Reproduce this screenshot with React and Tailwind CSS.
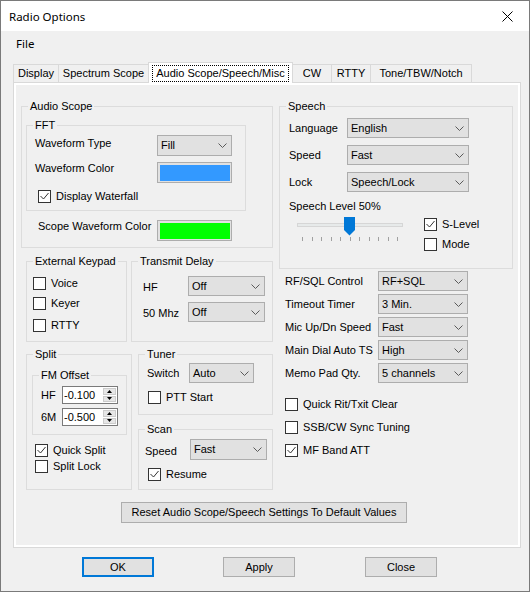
import React from "react";

function Chevron() {
  return (
    <svg width="9" height="5" viewBox="0 0 9 5" className="shrink-0">
      <path d="M0.5 0.5 L4.5 4.5 L8.5 0.5" fill="none" stroke="#5a5a5a" strokeWidth="1" />
    </svg>
  );
}

function Combo({ value, w, h = "h-[20px]" }) {
  return (
    <div className={`${w} ${h} flex items-center justify-between border border-[#adadad] bg-[#e1e1e1] pl-[3px] pr-[4px]`}>
      <span>{value}</span>
      <Chevron />
    </div>
  );
}

function Check({ checked, label, className = "" }) {
  return (
    <div className={`flex items-center gap-[5px] ${className}`}>
      <span className="w-[13px] h-[13px] border border-[#333333] bg-white flex items-center justify-center">
        {checked && (
          <svg width="11" height="11" viewBox="0 0 11 11">
            <path d="M1.5 5 L4.5 8 L9.5 2" fill="none" stroke="#333333" strokeWidth="1" />
          </svg>
        )}
      </span>
      <span className="leading-[13px]">{label}</span>
    </div>
  );
}

function Group({ title, className = "", children }) {
  return (
    <fieldset className={`border border-[#dcdcdc] ${className}`}>
      <legend className="ml-[6px] px-[2px] leading-[13px]">{title}</legend>
      {children}
    </fieldset>
  );
}

function ColorBtn({ color }) {
  return (
    <div className="w-[75px] h-[21px] border border-[#adadad] bg-[#e1e1e1] pl-[2px] pt-[2px] pr-[1px] pb-[1px]">
      <div className={`w-full h-full ${color}`} />
    </div>
  );
}

function Spin({ value }) {
  return (
    <div className="w-[56px] h-[18px] flex border border-[#7a7a7a] bg-white">
      <span className="flex-1 pl-[1px] leading-[16px]">{value}</span>
      <div className="w-[15px] flex flex-col gap-px p-px">
        <div className="flex-1 bg-[#e6e6e6] border border-[#cccccc] flex items-center justify-center">
          <svg width="5" height="3" viewBox="0 0 5 3"><path d="M2.5 0 L5 3 L0 3 Z" fill="#000" /></svg>
        </div>
        <div className="flex-1 bg-[#e6e6e6] border border-[#cccccc] flex items-center justify-center">
          <svg width="5" height="3" viewBox="0 0 5 3"><path d="M0 0 L5 0 L2.5 3 Z" fill="#000" /></svg>
        </div>
      </div>
    </div>
  );
}

function Slider() {
  return (
    <div className="relative w-[106px] h-[25px] ml-[8px]">
      <div className="mt-[6px] h-[4px] bg-[#e7eaea] border border-[#d6d6d6]" />
      <div className="mt-[10px] flex justify-between px-[5px]">
        {Array.from({ length: 11 }).map((_, i) => (
          <span key={i} className="w-px h-[4px] bg-[#a0a0a0]" />
        ))}
      </div>
      {/* thumb */}
      <svg className="absolute left-[47px] top-0" width="11" height="19" viewBox="0 0 11 19">
        <path d="M0 0 H11 V13 L5.5 18.5 L0 13 Z" fill="#0078d7" />
      </svg>
    </div>
  );
}

function Btn({ children, className = "" }) {
  return (
    <div className={`flex items-center justify-center bg-[#e1e1e1] border border-[#adadad] ${className}`}>
      {children}
    </div>
  );
}

const tabs = [
  { name: "Display", w: "w-[46px]" },
  { name: "Spectrum Scope", w: "w-[91px]" },
  { name: "Audio Scope/Speech/Misc", w: "w-[145px]", active: true },
  { name: "CW", w: "w-[40px]" },
  { name: "RTTY", w: "w-[40px]" },
  { name: "Tone/TBW/Notch", w: "w-[102px]" },
];

const miscRows = [
  ["RF/SQL Control", "RF+SQL"],
  ["Timeout Timer", "3 Min."],
  ["Mic Up/Dn Speed", "Fast"],
  ["Main Dial Auto TS", "High"],
  ["Memo Pad Qty.", "5 channels"],
];

export default function App() {
  return (
    <div className="w-[530px] h-[592px] bg-[#f0f0f0] border border-[#7a7a7a] flex flex-col font-['Liberation_Sans',Arial,sans-serif] text-[11px] leading-[13px] text-black">
      {/* Title bar */}
      <div className="h-[30px] shrink-0 bg-white flex items-center justify-between pl-[8px] pr-[16px] font-['Noto_Sans',sans-serif] text-[11.5px]">
        <span>Radio Options</span>
        <svg width="11" height="11" viewBox="0 0 11 11">
          <path d="M0.5 0.5 L10.5 10.5 M10.5 0.5 L0.5 10.5" stroke="#000" strokeWidth="1" />
        </svg>
      </div>

      {/* Menu */}
      <div className="h-[24px] shrink-0 flex items-center pl-[15px] font-['Noto_Sans',sans-serif] text-[11.5px]">
        <span>File</span>
      </div>

      {/* Tabs */}
      <div className="pl-[12px] pt-[7px]">
        <div className="flex items-end h-[20px]">
          {tabs.map((t, i) =>
            t.active ? (
              <div
                key={t.name}
                className={`${t.w} -ml-px h-[21px] -mb-px relative z-10 bg-white border-t border-l border-r border-[#d9d9d9] flex items-center justify-center`}
              >
                <span className="border border-dotted border-black px-[3px] leading-[15px]">{t.name}</span>
              </div>
            ) : (
              <div
                key={t.name}
                className={`${t.w} ${i > 0 ? "-ml-px" : ""} h-[18px] border-t border-l border-r border-[#d9d9d9] flex items-center justify-center`}
              >
                {t.name}
              </div>
            )
          )}
        </div>

        <div className="w-[508px] h-[466px] border border-[#d9d9d9]">
          <div className="h-full border-2 border-white pl-[5px] pt-[15px]">
            <div className="flex">
              {/* Left column */}
              <div className="w-[252px] flex flex-col">
                <Group title="Audio Scope" className="w-[252px] h-[148px]">
                  <Group title="FFT" className="ml-[4px] mt-[6px] w-[220px] h-[92px]">
                    <div className="flex items-start mt-[3px] pl-[8px]">
                      <span className="w-[122px] pt-[2px]">Waveform Type</span>
                      <Combo value="Fill" w="w-[75px]" h="h-[21px]" />
                    </div>
                    <div className="flex items-start mt-[6px] pl-[8px]">
                      <span className="w-[122px]">Waveform Color</span>
                      <ColorBtn color="bg-[#3399ff]" />
                    </div>
                    <Check checked label="Display Waterfall" className="mt-[7px] ml-[11px]" />
                  </Group>
                  <div className="flex items-start mt-[9px] pl-[16px]">
                    <span className="w-[119px]">Scope Waveform Color</span>
                    <ColorBtn color="bg-[#00ff00]" />
                  </div>
                </Group>

                <div className="flex mt-[7px] ml-[5px] gap-[4px]">
                  <Group title="External Keypad" className="w-[101px] h-[87px]">
                    <div className="pl-[6px] flex flex-col">
                      <Check label="Voice" className="mt-[9px]" />
                      <Check label="Keyer" className="mt-[7px]" />
                      <Check label="RTTY" className="mt-[9px]" />
                    </div>
                  </Group>
                  <Group title="Transmit Delay" className="w-[142px] h-[87px]">
                    <div className="pl-[11px]">
                      <div className="flex items-center mt-[8px]">
                        <span className="w-[45px] pt-[2px]">HF</span>
                        <Combo value="Off" w="w-[77px]" />
                      </div>
                      <div className="flex items-center mt-[6px]">
                        <span className="w-[45px] pt-[2px]">50 Mhz</span>
                        <Combo value="Off" w="w-[77px]" />
                      </div>
                    </div>
                  </Group>
                </div>

                <div className="flex mt-[6px] ml-[5px] gap-[6px]">
                  <Group title="Split" className="w-[106px] h-[142px]">
                    <Group title="FM Offset" className="ml-[5px] mt-[8px] w-[95px] h-[66px]">
                      <div className="pl-[8px]">
                        <div className="flex items-center mt-[4px]">
                          <span className="w-[21px]">HF</span>
                          <Spin value="-0.100" />
                        </div>
                        <div className="flex items-center mt-[4px]">
                          <span className="w-[21px]">6M</span>
                          <Spin value="-0.500" />
                        </div>
                      </div>
                    </Group>
                    <Check checked label="Quick Split" className="ml-[8px] mt-[9px]" />
                    <Check label="Split Lock" className="ml-[8px] mt-[3px]" />
                  </Group>
                  <div className="flex flex-col">
                    <Group title="Tuner" className="w-[135px] h-[67px]">
                      <div className="flex items-center mt-[2px] pl-[8px]">
                        <span className="w-[42px]">Switch</span>
                        <Combo value="Auto" w="w-[65px]" />
                      </div>
                      <Check label="PTT Start" className="mt-[8px] ml-[9px]" />
                    </Group>
                    <Group title="Scan" className="mt-[8px] w-[135px] h-[67px]">
                      <div className="flex items-center mt-[3px] pl-[6px]">
                        <span className="w-[45px] pt-[3px]">Speed</span>
                        <Combo value="Fast" w="w-[77px]" h="h-[21px]" />
                      </div>
                      <Check checked label="Resume" className="mt-[8px] ml-[9px]" />
                    </Group>
                  </div>
                </div>
              </div>

              {/* Right column */}
              <div className="ml-[6px] w-[234px] flex flex-col">
                <Group title="Speech" className="w-[234px] h-[169px]">
                  <div className="pl-[9px]">
                    <div className="flex items-center mt-[5px]">
                      <span className="w-[58px]">Language</span>
                      <Combo value="English" w="w-[122px]" />
                    </div>
                    <div className="flex items-center mt-[7px]">
                      <span className="w-[58px]">Speed</span>
                      <Combo value="Fast" w="w-[122px]" />
                    </div>
                    <div className="flex items-center mt-[7px]">
                      <span className="w-[58px]">Lock</span>
                      <Combo value="Speech/Lock" w="w-[122px]" />
                    </div>
                    <div className="mt-[8px]">Speech Level 50%</div>
                    <div className="flex mt-[4px]">
                      <Slider />
                      <div className="ml-[21px] flex flex-col">
                        <Check checked label="S-Level" className="mt-[1px]" />
                        <Check label="Mode" className="mt-[7px]" />
                      </div>
                    </div>
                  </div>
                </Group>

                <div className="pl-[6px] flex flex-col">
                  {miscRows.map(([label, value], i) => (
                    <div key={label} className={`flex items-center ${i === 0 ? "mt-[2px]" : "mt-[3px]"}`}>
                      <span className="w-[93px]">{label}</span>
                      <Combo value={value} w="w-[90px]" />
                    </div>
                  ))}
                  <Check label="Quick Rit/Txit Clear" className="mt-[15px]" />
                  <Check label="SSB/CW Sync Tuning" className="mt-[10px]" />
                  <Check checked label="MF Band ATT" className="mt-[10px]" />
                </div>
              </div>
            </div>

            <Btn className="mt-[12px] ml-[100px] w-[286px] h-[21px]">
              Reset Audio Scope/Speech Settings To Default Values
            </Btn>
          </div>
        </div>
      </div>

      {/* Dialog buttons */}
      <div className="flex mt-[9px] pl-[81px]">
        <div className="w-[72px] h-[20px] flex items-center justify-center bg-[#e1e1e1] border-2 border-[#0078d7]">OK</div>
        <Btn className="ml-[69px] w-[72px] h-[20px]">Apply</Btn>
        <Btn className="ml-[70px] w-[72px] h-[20px]">Close</Btn>
      </div>
    </div>
  );
}
